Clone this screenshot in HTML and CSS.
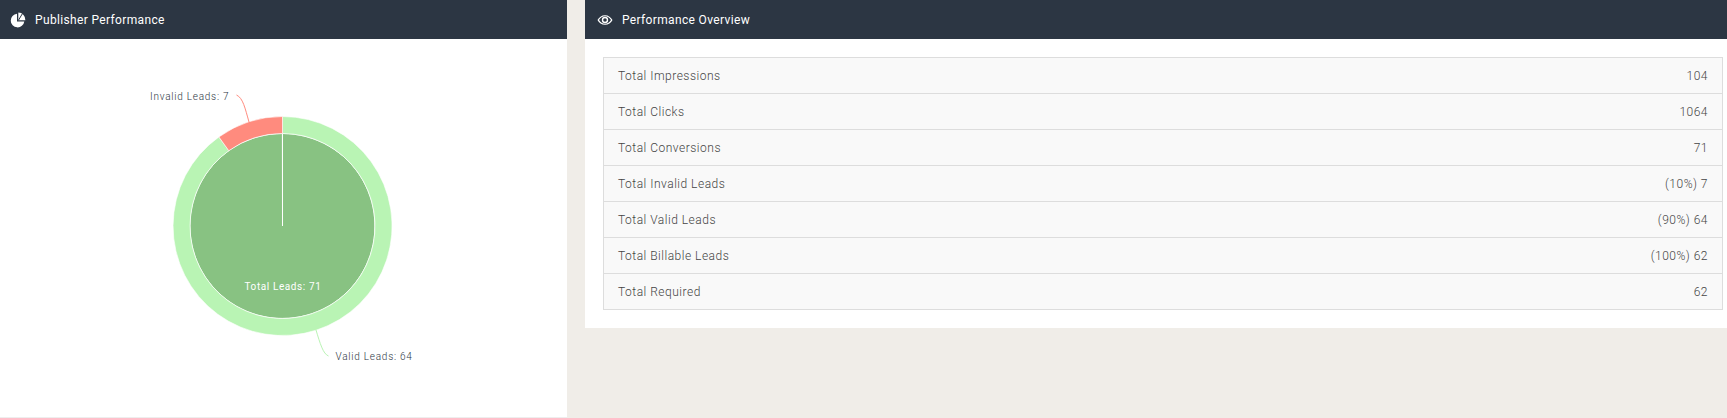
FILE: index.html
```html
<!DOCTYPE html>
<html lang="en">
<head>
<meta charset="utf-8">
<title>Performance</title>
<link rel="stylesheet" href="styles.css">
</head>
<body>
<div class="page">
  <section class="panel-left">
    <header class="panel-head">
      <svg class="icon" viewBox="0 0 16 16" width="16" height="16"><path fill="#fff" d="M7 1.800A6.800 6.800 0 1 0 14.300 9.500H7z"/><path fill="#fff" d="M8.300 .6V8.300H15.400A7.200 7.200 0 0 0 8.300 .6z"/><path fill="none" stroke="#2b3643" stroke-width="1" d="M8.600 8L12.300 1.800"/></svg>
      <span>Publisher Performance</span>
    </header>
    <div class="chart">
      <svg class="pie" width="567" height="378" viewBox="0 0 567 378">
        <g transform="translate(0,-39)">
          <path class="slice-inner" d="M282.500 226V133.500A92.500 92.500 0 1 1 282.400 133.500Z"/>
          <path class="slice-valid" d="M282.500 116.500A109.500 109.500 0 1 1 218.900 136.900L228.800 150.700A92.500 92.500 0 1 0 282.500 133.500Z"/>
          <path class="slice-invalid" d="M282.500 116.500A109.500 109.500 0 0 0 218.900 136.900L228.800 150.700A92.500 92.500 0 0 1 282.500 133.500Z"/>
          <path class="lead-invalid" d="M249 122C245 108 243 98 236.500 95"/>
          <path class="lead-valid" d="M316 330C320 343 323 354 328.500 356"/>
          <text class="lbl" x="150" y="100">Invalid Leads: 7</text>
          <text class="lbl" x="335.500" y="360">Valid Leads: 64</text>
          <text class="lbl lbl-in" x="244.500" y="290">Total Leads: 71</text>
        </g>
      </svg>
    </div>
  </section>
  <section class="panel-right">
    <header class="panel-head">
      <svg class="icon" viewBox="0 0 16 16" width="16" height="16"><path fill="#fff" fill-rule="evenodd" d="M8 3.200C4.600 3.200 2 5.300 .5 8 2 10.700 4.600 12.800 8 12.800s6-2.100 7.500-4.800C14 5.300 11.400 3.200 8 3.200zM8 4.300C5.600 4.300 3.300 5.800 2 8 3.300 10.200 5.600 11.700 8 11.700s4.700-1.500 6-3.700C12.700 5.800 10.400 4.300 8 4.300z"/><path fill="#fff" fill-rule="evenodd" d="M8 4.800A3.200 3.200 0 1 1 8 11.200 3.200 3.200 0 0 1 8 4.800zM8 6.200A1.800 1.800 0 1 0 8 9.800 1.800 1.800 0 0 0 8 6.200z"/></svg>
      <span>Performance Overview</span>
    </header>
    <div class="panel-body">
      <div class="stats">
        <div class="row"><span>Total Impressions</span><span>104</span></div>
        <div class="row"><span>Total Clicks</span><span>1064</span></div>
        <div class="row"><span>Total Conversions</span><span>71</span></div>
        <div class="row"><span>Total Invalid Leads</span><span>(10%) 7</span></div>
        <div class="row"><span>Total Valid Leads</span><span>(90%) 64</span></div>
        <div class="row"><span>Total Billable Leads</span><span>(100%) 62</span></div>
        <div class="row"><span>Total Required</span><span>62</span></div>
      </div>
    </div>
  </section>
</div>
</body>
</html>
```
FILE: styles.css
```css
html, body {
  margin: 0;
  padding: 0;
  height: 100%;
  overflow: hidden;
  background: #f0ede8;
  font-family: Roboto, "Liberation Sans", sans-serif;
}
.page {
  display: flex;
  gap: 18px;
  height: 418px;
}
.panel-left {
  width: 567px;
  flex: none;
  height: 418px;
  box-sizing: border-box;
  background: #fff;
  border-bottom: 1px solid #eee;
}
.panel-right {
  flex: 1;
  min-width: 0;
}
.panel-head {
  display: flex;
  align-items: center;
  gap: 9px;
  height: 39px;
  padding-left: 10px;
  background: #2c3643;
  color: #fff;
  font-size: 12px;
  letter-spacing: 0.35px;
}
.panel-right .panel-head {
  padding-left: 12px;
}
.icon {
  flex: none;
}
.chart {
  height: 378px;
}
.pie {
  display: block;
}
.slice-inner {
  fill: #88c282;
  stroke: #fff;
  stroke-width: 1;
}
.slice-valid {
  fill: #b9f4b4;
  stroke: #fff;
  stroke-width: 0.6;
}
.slice-invalid {
  fill: #ff8b7e;
  stroke: #fff;
  stroke-width: 0.6;
}
.lead-invalid {
  fill: none;
  stroke: #ff8b7e;
  stroke-width: 1;
}
.lead-valid {
  fill: none;
  stroke: #b9f4b4;
  stroke-width: 1;
}
.lbl {
  font-family: Roboto, "Liberation Sans", sans-serif;
  font-size: 10px;
  font-weight: 300;
  letter-spacing: 0.75px;
  fill: #2c3643;
}
.lbl-in {
  fill: #fff;
  font-weight: 400;
  letter-spacing: 0.6px;
}
.panel-body {
  background: #fff;
  padding: 18px 4px 18px 18px;
}
.stats {
  border: 1px solid #ddd;
  background: #f9f9f9;
}
.row {
  display: flex;
  justify-content: space-between;
  align-items: center;
  height: 35px;
  padding: 0 14px;
  border-bottom: 1px solid #ddd;
  font-size: 12px;
  font-weight: 300;
  letter-spacing: 0.5px;
  color: #444;
}
.row:last-child {
  border-bottom: 0;
}
```
